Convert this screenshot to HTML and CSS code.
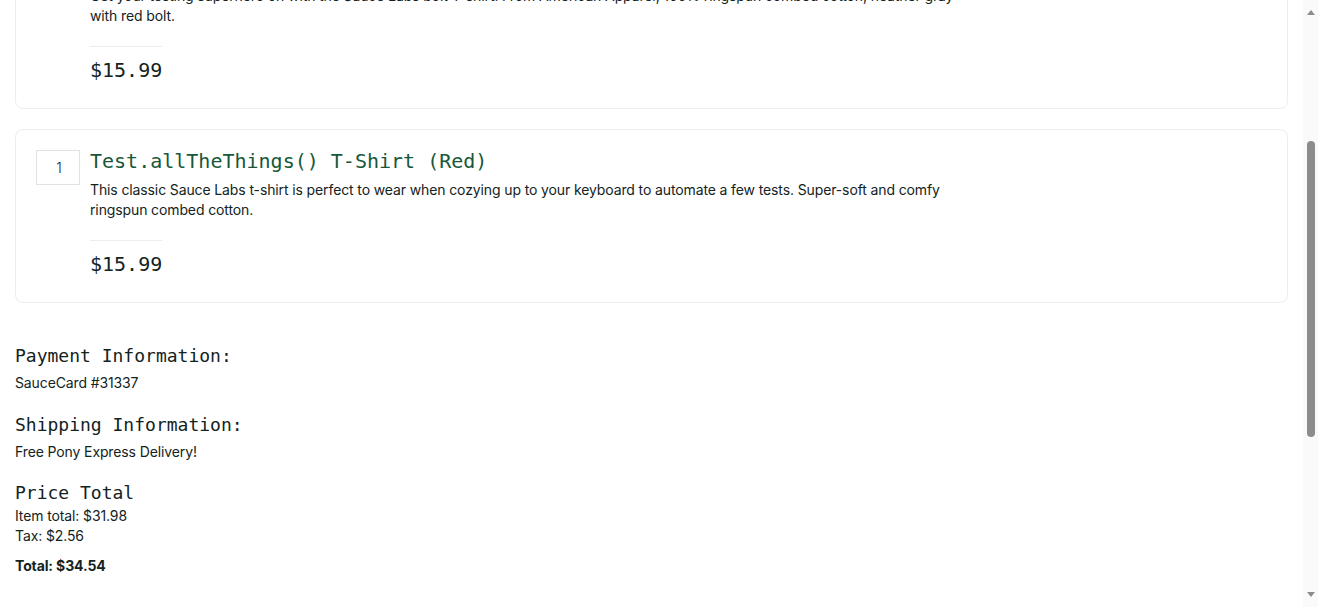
FILE: index.html
```html
<!DOCTYPE html>
<html lang="en">
<head>
<meta charset="utf-8">
<title>Swag Labs - Checkout: Overview</title>
<link rel="stylesheet" href="styles.css">
</head>
<body>
<div class="viewport">
  <main class="page">
    <div class="scrolled">
      <div class="cart-list">
        <div class="cart-item">
          <div class="qty">1</div>
          <div class="item-body">
            <div class="item-name">Sauce Labs Bolt T-Shirt</div>
            <div class="item-desc">Get your testing superhero on with the Sauce Labs bolt T-shirt. From American Apparel, 100% ringspun combed cotton, heather gray with red bolt.</div>
            <div class="pricebar"><div class="item-price">$15.99</div></div>
          </div>
        </div>
        <div class="cart-item">
          <div class="qty">1</div>
          <div class="item-body">
            <div class="item-name">Test.allTheThings() T-Shirt (Red)</div>
            <div class="item-desc">This classic Sauce Labs t-shirt is perfect to wear when cozying up to your keyboard to automate a few tests. Super-soft and comfy ringspun combed cotton.</div>
            <div class="pricebar"><div class="item-price">$15.99</div></div>
          </div>
        </div>
      </div>

      <div class="summary">
        <div class="summary-label first">Payment Information:</div>
        <div class="summary-value">SauceCard #31337</div>
        <div class="summary-label">Shipping Information:</div>
        <div class="summary-value">Free Pony Express Delivery!</div>
        <div class="summary-label total-label">Price Total</div>
        <div class="summary-line tight">Item total: $31.98</div>
        <div class="summary-line">Tax: $2.56</div>
        <div class="summary-total">Total: $34.54</div>
      </div>
    </div>
  </main>
  <div class="scrollbar">
    <div class="arrow up"></div>
    <div class="track">
      <div class="thumb"></div>
    </div>
    <div class="arrow down"></div>
  </div>
</div>
</body>
</html>
```

FILE: styles.css
```css
* { box-sizing: border-box; }
html, body {
  margin: 0;
  padding: 0;
  height: 100%;
  overflow: hidden;
  background: #ffffff;
}
body {
  font-family: "Inter", "Noto Sans", sans-serif;
  font-size: 14px;
  line-height: 20px;
  letter-spacing: -0.12px;
  color: #132322;
}
.viewport {
  display: flex;
  height: 607px;
  width: 1318px;
}
.page {
  flex: 1;
  overflow: hidden;
  padding: 0 15px;
}
.scrolled {
  margin-top: -65px;
}
.cart-list {
  display: flex;
  flex-direction: column;
  gap: 20px;
}
.cart-item {
  display: flex;
  gap: 10px;
  border: 1px solid #ededed;
  border-radius: 8px;
  padding: 20px 20px 25px 20px;
  height: 174px;
}
.qty {
  flex: 0 0 44px;
  width: 44px;
  height: 35px;
  border: 1px solid #e2e2e2;
  display: flex;
  align-items: center;
  justify-content: center;
  font-size: 14px;
  font-weight: 300;
  color: #132322;
  padding-left: 2px;
}
.item-body {
  flex: 1;
}
.item-name {
  font-family: "DejaVu Sans Mono", "Liberation Mono", monospace;
  font-size: 20px;
  line-height: 24px;
  letter-spacing: 0;
  color: #18583a;
  margin-top: -1px;
  margin-bottom: 7px;
}
.item-desc {
  max-width: 870px;
  font-size: 14px;
  line-height: 20px;
  color: #132322;
}
.pricebar {
  margin-top: 20px;
  display: flex;
}
.item-price {
  border-top: 1px solid #ededed;
  padding-top: 11px;
  font-family: "DejaVu Sans Mono", "Liberation Mono", monospace;
  font-size: 20px;
  line-height: 24px;
  letter-spacing: 0;
  color: #132322;
}
.summary {
  display: flex;
  flex-direction: column;
  padding-top: 41px;
}
.summary-label {
  font-family: "DejaVu Sans Mono", "Liberation Mono", monospace;
  font-size: 18px;
  line-height: 24px;
  letter-spacing: 0;
  color: #132322;
  margin-top: 20px;
  margin-bottom: 5px;
}
.summary-label.first { margin-top: 0; }
.summary-label.total-label { margin-top: 19px; }
.summary-value, .summary-line {
  font-size: 14px;
  line-height: 20px;
}
.summary-line.tight { margin-top: -4px; }
.summary-total {
  font-size: 14px;
  line-height: 20px;
  font-weight: 700;
  margin-top: 10px;
}
.scrollbar {
  flex: 0 0 15px;
  width: 15px;
  background: #fafafa;
  display: flex;
  flex-direction: column;
  align-items: center;
}
.arrow {
  flex: 0 0 auto;
  width: 0;
  height: 0;
  border-left: 4px solid transparent;
  border-right: 4px solid transparent;
}
.arrow.up {
  margin-top: 10px;
  border-bottom: 5px solid #8c8c8c;
}
.arrow.down {
  margin-bottom: 10px;
  border-top: 5px solid #8c8c8c;
}
.track {
  flex: 1;
  width: 100%;
  display: flex;
  justify-content: center;
  padding-top: 126px;
}
.thumb {
  width: 8px;
  height: 296px;
  background: #8c8c8c;
  border-radius: 4px;
}
```
